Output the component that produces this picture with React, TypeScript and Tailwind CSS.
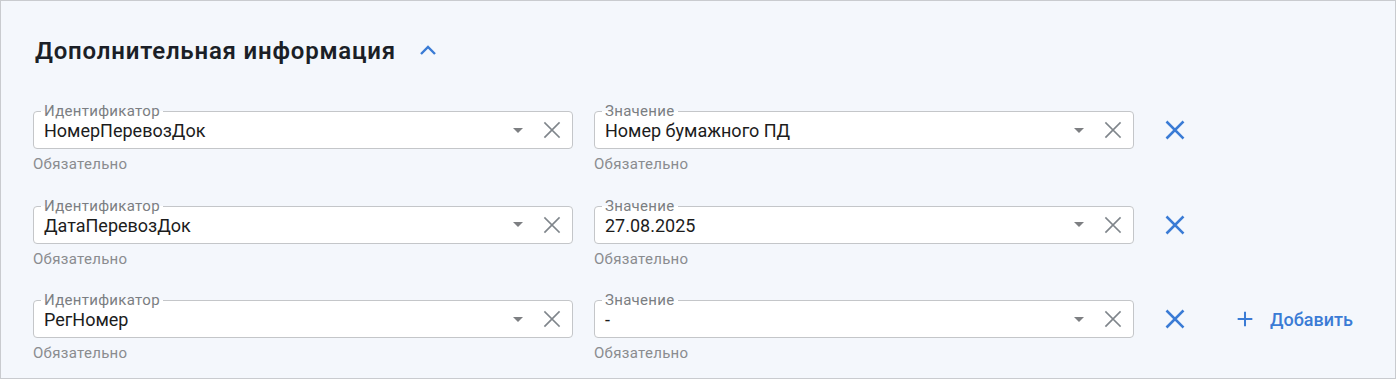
import React from "react";

type Row = { id: string; value: string };

const rows: Row[] = [
  { id: "НомерПеревозДок", value: "Номер бумажного ПД" },
  { id: "ДатаПеревозДок", value: "27.08.2025" },
  { id: "РегНомер", value: "-" },
];

function Cross({ className }: { className?: string }) {
  return (
    <svg viewBox="0 0 24 24" className={className} fill="none" stroke="currentColor" strokeLinecap="square">
      <path d="M5 5l14 14M19 5L5 19" />
    </svg>
  );
}

function Field({ label, value }: { label: string; value: string }) {
  return (
    <div className="w-[540px]">
      <div className="relative flex h-[38px] items-center rounded-[4px] border border-[#c4c6c9] bg-white pl-[10px] pr-[8px]">
        <span className="absolute -top-[9px] left-[7px] bg-[linear-gradient(to_bottom,#f4f7fc_50%,#ffffff_50%)] px-[3px] text-[15px] leading-[16px] tracking-[0.3px] text-[#7b7e82]">
          {label}
        </span>
        <span className="flex-1 pt-[1px] text-[18px] text-[#1c1c1c]">{value}</span>
        <span className="mr-[17px] h-0 w-0 border-x-[5px] border-t-[5px] border-x-transparent border-t-[#7d7f82]" />
        <Cross className="h-[24px] w-[24px] stroke-[1.7] text-[#7f858b]" />
      </div>
      <p className="mt-[7px] text-[15px] leading-[16px] tracking-[0.3px] text-[#8a8c8f]">Обязательно</p>
    </div>
  );
}

export default function App() {
  return (
    <div className="h-[379px] w-[1396px] border border-[#c9cbcf] bg-[#f4f7fc] font-['Roboto',sans-serif]">
      <div className="flex items-center gap-[20px] pl-[34px] pt-[34px]">
        <h2 className="text-[24px] font-semibold leading-[32px] tracking-[0.8px] text-[#1b1f27]">Дополнительная информация</h2>
        <svg viewBox="0 0 24 24" className="h-[24px] w-[24px] text-[#3a7bd5]" fill="none" stroke="currentColor" strokeWidth="2.4">
          <path d="M5 15l7-7 7 7" />
        </svg>
      </div>
      <div className="mt-[44px] flex flex-col gap-[33.5px] pl-[32px]">
        {rows.map((r, i) => (
          <div key={r.id} className="flex items-start">
            <Field label="Идентификатор" value={r.id} />
            <div className="ml-[21px]">
              <Field label="Значение" value={r.value} />
            </div>
            <button type="button" className="ml-[21px] flex h-[38px] w-[40px] items-center justify-center text-[#3a7bd5]">
              <Cross className="h-[26px] w-[26px] stroke-[2.4]" />
            </button>
            {i === rows.length - 1 && (
              <button type="button" className="ml-[39px] flex h-[38px] items-center gap-[14px] text-[18px] font-medium text-[#3a7bd5]">
                <svg viewBox="0 0 24 24" className="h-[22px] w-[22px]" fill="none" stroke="currentColor" strokeWidth="2.2">
                  <path d="M12 4v16M4 12h16" />
                </svg>
                Добавить
              </button>
            )}
          </div>
        ))}
      </div>
    </div>
  );
}
